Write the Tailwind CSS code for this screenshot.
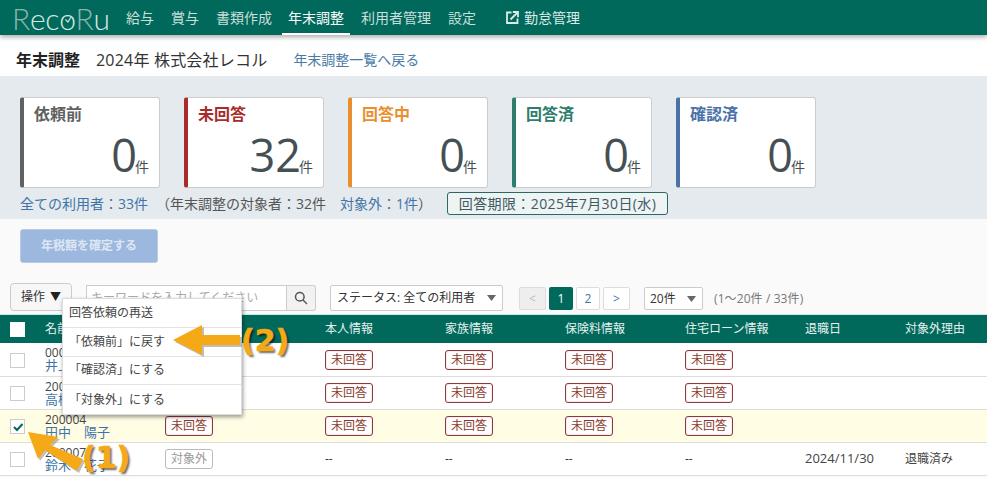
<!DOCTYPE html>
<html lang="ja"><head><meta charset="utf-8">
<script src="https://cdn.jsdelivr.net/npm/@tailwindcss/browser@4"></script>
</head>
<body class="m-0 bg-white overflow-hidden font-['Open_Sans','Noto_Sans_CJK_JP',sans-serif] text-[#333] text-[12px]">
<div class="relative w-[987px] h-[478px] overflow-hidden bg-[#fafafa]">
<header class="h-[35px] bg-[#00695c] flex pl-[12px] shadow-[0_2px_5px_rgba(0,0,0,0.35)] relative z-10">
  <div class="w-[108px] h-[35px] flex items-center pt-[1px] text-[30px] font-light tracking-[-0.3px] leading-none text-[#d5e8e3] font-['Lato',sans-serif]">
    <span class="text-[#88b5ab]">R</span><span>e</span><span>c</span>
    <span class="relative">o<svg class="absolute left-[4px] top-[12px] w-[10px] h-[10px]" viewBox="0 0 10 10" fill="none" stroke="#d5e8e3" stroke-width="1.1"><path d="M2.5 4.5L5 7L8 2"/></svg></span>
    <span class="text-[#88b5ab]">R</span><span>u</span>
  </div>
  <nav class="flex h-[35px] gap-[5px] text-[14px] text-[#c9dfda]">
    <a class="px-[6px] flex items-center">給与</a>
    <a class="px-[6px] flex items-center">賞与</a>
    <a class="px-[6px] flex items-center">書類作成</a>
    <a class="-ml-[1px] px-[6px] flex items-center text-white border-b-2 border-white pt-[2px]">年末調整</a>
    <a class="px-[6px] flex items-center">利用者管理</a>
    <a class="px-[6px] flex items-center">設定</a>
    <a class="ml-[19px] flex items-center gap-[5px] text-[#dcebe8]">
      <svg class="w-[13px] h-[13px]" viewBox="0 0 13 13" fill="none" stroke="currentColor" stroke-width="1.8"><path d="M5.5 1.5H1v10.5h10.5V7.5"/><path d="M4.5 8.5L11 2M6.8 1h5.2v5.2"/></svg>
      勤怠管理</a>
  </nav>
</header>
<div class="h-[41px] bg-white flex items-center pl-[16px] pt-[12px] pb-[4px]">
  <span class="text-[16px] font-bold text-[#222]">年末調整</span>
  <span class="text-[16px] ml-[16px] text-[#333] tracking-[0.2px] whitespace-nowrap">2024年 株式会社レコル</span>
  <a class="text-[14px] ml-[26px] text-[#4a7ba6]">年末調整一覧へ戻る</a>
</div>
<section class="bg-[#e4eaed] h-[143px] pl-[20px] pt-[21px]">
  <div class="flex gap-[24px]">
    <div class="w-[140px] h-[91px] bg-white border border-[#ccc] border-l-[4px] border-l-[#616161] rounded-[3px] pl-[10px] pr-[10px] flex flex-col justify-between">
      <div class="text-[16px] leading-[20px] pt-[6px] font-bold text-[#616161]">依頼前</div>
      <div class="flex justify-end items-baseline text-[#455055] pb-[8px]"><span class="text-[45px] leading-[48px] -mr-[2px]">0</span><span class="text-[14px]">件</span></div>
    </div>
    <div class="w-[140px] h-[91px] bg-white border border-[#ccc] border-l-[4px] border-l-[#a92c2c] rounded-[3px] pl-[10px] pr-[10px] flex flex-col justify-between">
      <div class="text-[16px] leading-[20px] pt-[6px] font-bold text-[#a92c2c]">未回答</div>
      <div class="flex justify-end items-baseline text-[#455055] pb-[8px]"><span class="text-[45px] leading-[48px] -mr-[2px]">32</span><span class="text-[14px]">件</span></div>
    </div>
    <div class="w-[140px] h-[91px] bg-white border border-[#ccc] border-l-[4px] border-l-[#ea8f2f] rounded-[3px] pl-[10px] pr-[10px] flex flex-col justify-between">
      <div class="text-[16px] leading-[20px] pt-[6px] font-bold text-[#ea8f2f]">回答中</div>
      <div class="flex justify-end items-baseline text-[#455055] pb-[8px]"><span class="text-[45px] leading-[48px] -mr-[2px]">0</span><span class="text-[14px]">件</span></div>
    </div>
    <div class="w-[140px] h-[91px] bg-white border border-[#ccc] border-l-[4px] border-l-[#2e7d6e] rounded-[3px] pl-[10px] pr-[10px] flex flex-col justify-between">
      <div class="text-[16px] leading-[20px] pt-[6px] font-bold text-[#2e7d6e]">回答済</div>
      <div class="flex justify-end items-baseline text-[#455055] pb-[8px]"><span class="text-[45px] leading-[48px] -mr-[2px]">0</span><span class="text-[14px]">件</span></div>
    </div>
    <div class="w-[140px] h-[91px] bg-white border border-[#ccc] border-l-[4px] border-l-[#4a72a8] rounded-[3px] pl-[10px] pr-[10px] flex flex-col justify-between">
      <div class="text-[16px] leading-[20px] pt-[6px] font-bold text-[#4a72a8]">確認済</div>
      <div class="flex justify-end items-baseline text-[#455055] pb-[8px]"><span class="text-[45px] leading-[48px] -mr-[2px]">0</span><span class="text-[14px]">件</span></div>
    </div>
  </div>
  <div class="flex items-center mt-[4px] text-[14px] h-[23px] text-[#555]">
    <a class="text-[#3f74a8] w-[136px] whitespace-nowrap">全ての利用者：33件</a>
    <span class="w-[184px] whitespace-nowrap">（年末調整の対象者：32件</span>
    <a class="text-[#3f74a8] whitespace-nowrap">対象外：1件</a><span>）</span>
    <span class="ml-[15px] h-[23px] w-[221px] border border-[#2a6a62] rounded-[3px] flex items-center justify-center text-[#3d5a62] bg-[#eef3f3] whitespace-nowrap tracking-[0.4px]">回答期限：2025年7月30日(水)</span>
  </div>
</section>
<div class="h-[64px] pl-[20px] pt-[10px]">
  <button class="block w-[138px] h-[34px] bg-[#9db8de] border border-[#b9cbe4] rounded-[3px] text-[#dde7f3] text-[12px] font-bold">年税額を確定する</button>
</div>
<div class="h-[31px] flex items-start pl-[10px]">
  <button class="w-[62px] h-[28px] border border-[#ccc] bg-[#f7f7f7] rounded-[4px] text-[12px] text-[#333] flex items-center justify-center gap-[5px]">操作<span class="text-[11px] text-[#222]">▼</span></button>
  <div class="ml-[14px] mt-[2px] w-[201px] h-[26px] border border-[#ccc] bg-white flex items-center pl-[4px] text-[12px] text-[#aaa] whitespace-nowrap">キーワードを入力してください</div>
  <div class="w-[29px] h-[26px] mt-[2px] border border-l-0 border-[#ccc] bg-[#f2f2f2] rounded-r-[3px] flex items-center justify-center">
    <svg class="w-[14px] h-[14px]" viewBox="0 0 14 14" fill="none" stroke="#555" stroke-width="1.5"><circle cx="5.8" cy="5.8" r="4.3"/><path d="M9 9l4 4"/></svg>
  </div>
  <div class="ml-[14px] mt-[2px] w-[173px] h-[26px] border border-[#ccc] rounded-[2px] bg-white flex items-center justify-between pl-[6px] pr-[6px] text-[12px] text-[#333] whitespace-nowrap">ステータス: 全ての利用者
    <svg class="w-[9px] h-[6px]" viewBox="0 0 9 6" fill="#666"><path d="M0 0h9L4.5 6z"/></svg></div>
  <div class="ml-[16px] mt-[4px] flex gap-[3px] text-[12px]">
    <span class="w-[27px] h-[23px] border border-[#ddd] bg-[#eee] rounded-[2px] flex items-center justify-center text-[#bbb]">&lt;</span>
    <span class="w-[24px] h-[23px] bg-[#00695c] rounded-[2px] flex items-center justify-center text-white">1</span>
    <span class="w-[24px] h-[23px] border border-[#ddd] bg-white rounded-[2px] flex items-center justify-center text-[#3f74a8]">2</span>
    <span class="w-[27px] h-[23px] border border-[#ddd] bg-white rounded-[2px] flex items-center justify-center text-[#3f74a8]">&gt;</span>
  </div>
  <div class="ml-[14px] mt-[4px] w-[59px] h-[23px] border border-[#ccc] rounded-[2px] bg-white flex items-center justify-between pl-[5px] pr-[6px] text-[12px] whitespace-nowrap">20件
    <svg class="w-[9px] h-[6px]" viewBox="0 0 9 6" fill="#666"><path d="M0 0h9L4.5 6z"/></svg></div>
  <div class="ml-[11px] mt-[4px] h-[23px] flex items-center text-[#777] text-[12px] tracking-[0.1px] whitespace-nowrap">(1〜20件 / 33件)</div>
</div>
<div class="border-t border-[#c5ebe5]">
  <div class="h-[28px] bg-[#00695c] text-[#e6f1ef] text-[12px] grid grid-cols-[45px_120px_160px_120px_120px_120px_120px_100px_82px] items-center">
    <span class="ml-[10px] mt-[1px] w-[15px] h-[15px] bg-white block"></span>
    <span>名前</span><span>ステータス</span><span>本人情報</span><span>家族情報</span><span>保険料情報</span><span>住宅ローン情報</span><span>退職日</span><span>対象外理由</span>
  </div>
  <div class="h-[34px] bg-white border-b border-[#ddd] grid grid-cols-[45px_120px_160px_120px_120px_120px_120px_100px_82px] items-center">
    <span class="ml-[10px] mt-[1px] w-[15px] h-[15px] bg-white border border-[#ccc] block"></span>
    <div class="leading-[13px] -mt-[1px]"><div class="text-[#444]">000001</div><div class="text-[13px] text-[#3f74a8]">井上　太郎</div></div>
    <span class="w-[48px] h-[20px] border border-[#8a3a3a] rounded-[3px] bg-white shadow-[inset_0_0_2px_rgba(200,60,60,0.35)] flex items-center justify-center text-[#8b3a2a]">未回答</span>
    <span class="w-[48px] h-[20px] border border-[#8a3a3a] rounded-[3px] bg-white shadow-[inset_0_0_2px_rgba(200,60,60,0.35)] flex items-center justify-center text-[#8b3a2a]">未回答</span>
    <span class="w-[48px] h-[20px] border border-[#8a3a3a] rounded-[3px] bg-white shadow-[inset_0_0_2px_rgba(200,60,60,0.35)] flex items-center justify-center text-[#8b3a2a]">未回答</span>
    <span class="w-[48px] h-[20px] border border-[#8a3a3a] rounded-[3px] bg-white shadow-[inset_0_0_2px_rgba(200,60,60,0.35)] flex items-center justify-center text-[#8b3a2a]">未回答</span>
    <span class="w-[48px] h-[20px] border border-[#8a3a3a] rounded-[3px] bg-white shadow-[inset_0_0_2px_rgba(200,60,60,0.35)] flex items-center justify-center text-[#8b3a2a]">未回答</span>
    <span></span><span></span>
  </div>
  <div class="h-[33px] bg-white border-b border-[#ddd] grid grid-cols-[45px_120px_160px_120px_120px_120px_120px_100px_82px] items-center">
    <span class="ml-[10px] mt-[1px] w-[15px] h-[15px] bg-white border border-[#ccc] block"></span>
    <div class="leading-[13px] -mt-[1px]"><div class="text-[#444]">200002</div><div class="text-[13px] text-[#3f74a8]">高橋　一郎</div></div>
    <span class="w-[48px] h-[20px] border border-[#8a3a3a] rounded-[3px] bg-white shadow-[inset_0_0_2px_rgba(200,60,60,0.35)] flex items-center justify-center text-[#8b3a2a]">未回答</span>
    <span class="w-[48px] h-[20px] border border-[#8a3a3a] rounded-[3px] bg-white shadow-[inset_0_0_2px_rgba(200,60,60,0.35)] flex items-center justify-center text-[#8b3a2a]">未回答</span>
    <span class="w-[48px] h-[20px] border border-[#8a3a3a] rounded-[3px] bg-white shadow-[inset_0_0_2px_rgba(200,60,60,0.35)] flex items-center justify-center text-[#8b3a2a]">未回答</span>
    <span class="w-[48px] h-[20px] border border-[#8a3a3a] rounded-[3px] bg-white shadow-[inset_0_0_2px_rgba(200,60,60,0.35)] flex items-center justify-center text-[#8b3a2a]">未回答</span>
    <span class="w-[48px] h-[20px] border border-[#8a3a3a] rounded-[3px] bg-white shadow-[inset_0_0_2px_rgba(200,60,60,0.35)] flex items-center justify-center text-[#8b3a2a]">未回答</span>
    <span></span><span></span>
  </div>
  <div class="h-[33px] bg-[#fffde4] border-b border-[#ddd] grid grid-cols-[45px_120px_160px_120px_120px_120px_120px_100px_82px] items-center">
    <span class="ml-[10px] mt-[1px] w-[15px] h-[15px] bg-white border border-[#ccc] flex items-center justify-center">
      <svg class="w-[12px] h-[12px]" viewBox="0 0 12 12" fill="none" stroke="#00695c" stroke-width="2"><path d="M2 6l3 3 5.5-6"/></svg>
    </span>
    <div class="leading-[13px] -mt-[1px]"><div class="text-[#444]">200004</div><div class="text-[13px] text-[#3f74a8]">田中　陽子</div></div>
    <span class="w-[48px] h-[20px] border border-[#8a3a3a] rounded-[3px] bg-white shadow-[inset_0_0_2px_rgba(200,60,60,0.35)] flex items-center justify-center text-[#8b3a2a]">未回答</span>
    <span class="w-[48px] h-[20px] border border-[#8a3a3a] rounded-[3px] bg-white shadow-[inset_0_0_2px_rgba(200,60,60,0.35)] flex items-center justify-center text-[#8b3a2a]">未回答</span>
    <span class="w-[48px] h-[20px] border border-[#8a3a3a] rounded-[3px] bg-white shadow-[inset_0_0_2px_rgba(200,60,60,0.35)] flex items-center justify-center text-[#8b3a2a]">未回答</span>
    <span class="w-[48px] h-[20px] border border-[#8a3a3a] rounded-[3px] bg-white shadow-[inset_0_0_2px_rgba(200,60,60,0.35)] flex items-center justify-center text-[#8b3a2a]">未回答</span>
    <span class="w-[48px] h-[20px] border border-[#8a3a3a] rounded-[3px] bg-white shadow-[inset_0_0_2px_rgba(200,60,60,0.35)] flex items-center justify-center text-[#8b3a2a]">未回答</span>
    <span></span><span></span>
  </div>
  <div class="h-[33px] bg-white border-b border-[#ddd] grid grid-cols-[45px_120px_160px_120px_120px_120px_120px_100px_82px] items-center">
    <span class="ml-[10px] mt-[1px] w-[15px] h-[15px] bg-white border border-[#ccc] block"></span>
    <div class="leading-[13px] -mt-[1px]"><div class="text-[#444]">200007</div><div class="text-[13px] text-[#3f74a8]">鈴木　花子</div></div>
    <span class="w-[48px] h-[20px] border border-[#bbb] rounded-[3px] bg-white flex items-center justify-center text-[#999]">対象外</span>
    <span>--</span><span>--</span><span>--</span><span>--</span><span class="text-[13px] text-[#444]">2024/11/30</span><span class="text-[#444]">退職済み</span>
  </div>
</div>

<!-- dropdown menu over the table -->
<div class="absolute left-[62px] top-[298px] w-[180px] h-[117px] bg-white border border-[#ddd] shadow-[1px_2px_4px_rgba(0,0,0,0.4)] z-20 text-[12px] text-[#444] flex flex-col">
  <div class="h-[29px] flex items-center pl-[6px] border-b border-[#e3e3e3]">回答依頼の再送</div>
  <div class="h-[29px] flex items-center pl-[6px] border-b border-[#e3e3e3]">「依頼前」に戻す</div>
  <div class="h-[29px] flex items-center pl-[6px] border-b border-[#e3e3e3]">「確認済」にする</div>
  <div class="h-[29px] flex items-center pl-[6px]">「対象外」にする</div>
</div>

<!-- annotation arrows -->
<svg class="absolute left-0 top-0 z-30 w-[987px] h-[478px]" viewBox="0 0 987 478">
  <g fill="#8a8a8a" opacity="0.55" transform="translate(2 2)">
    <polygon points="173,340 202,325 202,335 240,335 240,345 202,345 202,355"/>
    <polygon points="28,432 58,437 50,445 83,459 77,471 45,450 38,459"/>
  </g>
  <polygon fill="#f5a916" points="173,340 202,325 202,335 240,335 240,345 202,345 202,355"/>
  <polygon fill="#f5a916" points="28,432 58,437 50,445 83,459 77,471 45,450 38,459"/>
</svg>
<span class="absolute left-[241px] top-[322px] z-30 text-[30px] leading-[38px] font-bold text-[#f5a916] [-webkit-text-stroke:0.6px_#f5a916] [text-shadow:2px_2px_2px_rgba(0,0,0,0.6)] font-['DejaVu_Sans',sans-serif]">(2)</span>
<span class="absolute left-[82px] top-[439px] z-30 text-[30px] leading-[38px] font-bold text-[#f5a916] [-webkit-text-stroke:0.6px_#f5a916] [text-shadow:2px_2px_2px_rgba(0,0,0,0.6)] font-['DejaVu_Sans',sans-serif]">(1)</span>
</div>
</body></html>
